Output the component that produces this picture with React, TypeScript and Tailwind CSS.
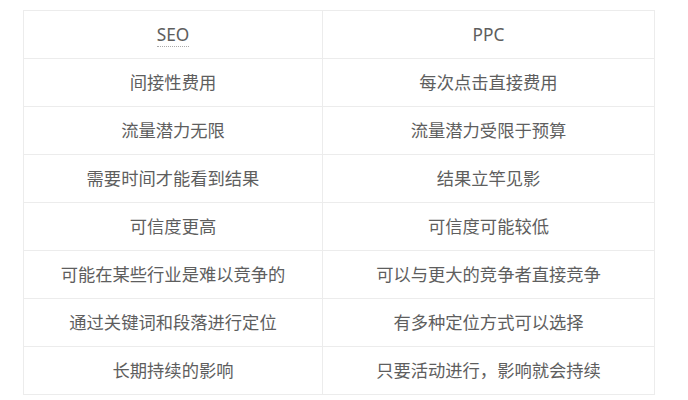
const rows: [string, string][] = [
  ["间接性费用", "每次点击直接费用"],
  ["流量潜力无限", "流量潜力受限于预算"],
  ["需要时间才能看到结果", "结果立竿见影"],
  ["可信度更高", "可信度可能较低"],
  ["可能在某些行业是难以竞争的", "可以与更大的竞争者直接竞争"],
  ["通过关键词和段落进行定位", "有多种定位方式可以选择"],
  ["长期持续的影响", "只要活动进行，影响就会持续"],
];

export default function App() {
  return (
    <div className="w-[688px] h-[400px] bg-white pt-[10px] pl-[23px] font-['Noto_Sans','Noto_Sans_CJK_SC',sans-serif] text-[#5e5e5e] text-[17.3px]">
      <table className="w-[631px] border-collapse border border-[#ececec] table-fixed">
        <colgroup>
          <col className="w-[299px]" />
          <col className="w-[332px]" />
        </colgroup>
        <thead>
          <tr className="h-[48px]">
            <th className="border border-[#ececec] font-normal text-center">
              <abbr
                title="Search Engine Optimization"
                className="no-underline border-b border-dotted border-[#aaa] leading-[20px]"
              >
                SEO
              </abbr>
            </th>
            <th className="border border-[#ececec] font-normal text-center">PPC</th>
          </tr>
        </thead>
        <tbody>
          {rows.map(([seo, ppc]) => (
            <tr key={seo} className="h-[48px]">
              <td className="border border-[#ececec] text-center">{seo}</td>
              <td className="border border-[#ececec] text-center">{ppc}</td>
            </tr>
          ))}
        </tbody>
      </table>
    </div>
  );
}
